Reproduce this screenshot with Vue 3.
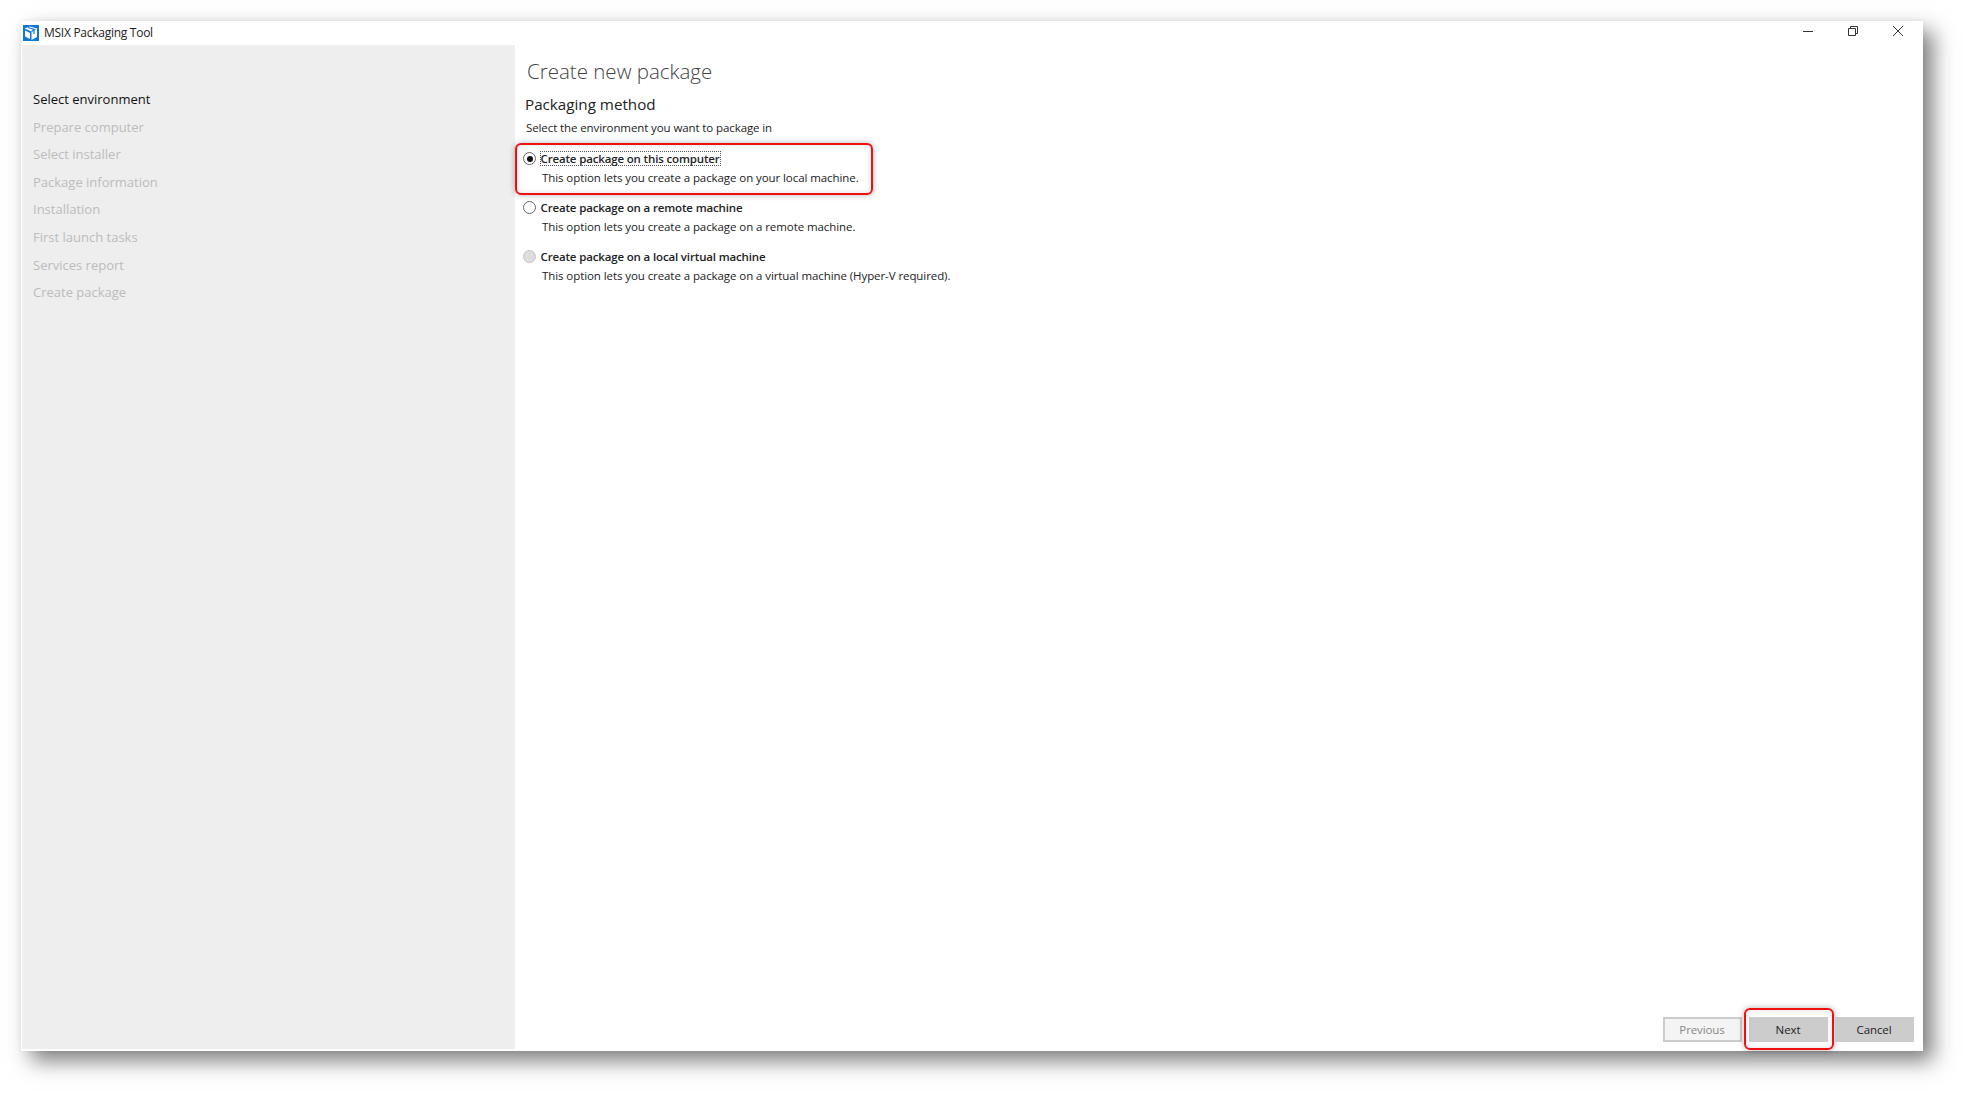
<script setup>
const steps = ['Select environment','Prepare computer','Select installer','Package information','Installation','First launch tasks','Services report','Create package']
const options = [
  { title: 'Create package on this computer', desc: 'This option lets you create a package on your local machine.', state: 'checked' },
  { title: 'Create package on a remote machine', desc: 'This option lets you create a package on a remote machine.', state: '' },
  { title: 'Create package on a local virtual machine', desc: 'This option lets you create a package on a virtual machine (Hyper-V required).', state: 'disabled' },
]
</script>

<template>
  <div class="page">
    <div class="window">
      <header class="titlebar">
        <svg class="logo" width="16" height="16" viewBox="0 0 16 16">
          <rect width="16" height="16" fill="#0f78d4"/>
          <path d="M1.500 3.500 7 1.500 14 3.500 14 12 8.500 15 8.500 6.500Z" fill="#fff"/>
          <path d="M2 5.500 7 8 7 14 2 11.500Z" fill="#fff"/>
          <path d="M5 2.500 11.500 4.500 8.500 6.500M11 4.500V9" fill="none" stroke="#0f78d4" stroke-width="1.200"/>
        </svg>
        <span class="apptitle">MSIX Packaging Tool</span>
        <div class="controls">
          <svg width="12" height="12" viewBox="0 0 12 12"><path d="M1 6.500H11" stroke="#333" fill="none"/></svg>
          <svg width="12" height="12" viewBox="0 0 12 12"><path d="M1.500 3.500H8.500V10.500H1.500ZM3.500 3.500V1.500H10.500V8.500H8.500" stroke="#333" fill="none"/></svg>
          <svg width="12" height="12" viewBox="0 0 12 12"><path d="M1 1 11 11M11 1 1 11" stroke="#333" fill="none"/></svg>
        </div>
      </header>
      <div class="body">
        <nav class="sidebar">
          <div v-for="(s, i) in steps" :key="s" class="step" :class="{ active: i === 0 }">{{ s }}</div>
        </nav>
        <main class="content">
          <h1>Create new package</h1>
          <h2>Packaging method</h2>
          <p class="intro">Select the environment you want to package in</p>
          <div class="options">
            <div v-for="o in options" :key="o.title" class="option">
              <div class="optrow">
                <span class="radio" :class="o.state"></span>
                <span class="opttitle" :class="{ focus: o.state === 'checked' }">{{ o.title }}</span>
              </div>
              <div class="optdesc">{{ o.desc }}</div>
            </div>
            <div class="mark markopt"></div>
          </div>
          <footer class="actions">
            <button class="btn prev">Previous</button>
            <button class="btn next">Next<span class="mark marknext"></span></button>
            <button class="btn">Cancel</button>
          </footer>
        </main>
      </div>
    </div>
  </div>
</template>

<style>
html, body { margin: 0; background: #fff; }
</style>

<style scoped>
.page {
  width: 1965px; height: 1093px; box-sizing: border-box;
  padding: 21px 42px 42px 21px; background: #fff; overflow: hidden;
  font-family: "Open Sans", "Noto Sans", sans-serif; color: #1a1a1a;
}
.window {
  height: 100%; display: flex; flex-direction: column; background: #fff;
  box-shadow: 10px 10px 20px rgba(0,0,0,.5), 0 0 6px rgba(0,0,0,.05);
}
.titlebar { height: 24px; flex: none; display: flex; align-items: center; padding-left: 2px; }
.logo { flex: none; margin-top: -1px; }
.apptitle { margin-left: 5px; font-size: 12px; letter-spacing: -.27px; color: #222; margin-top: -1px; }
.controls { margin-left: auto; display: flex; gap: 33px; padding-right: 19px; margin-top: -4px; }
.body { flex: 1; display: flex; min-height: 0; padding: 0 1px 2px; }
.sidebar { width: 493px; flex: none; background: #eee; padding-top: 41px; box-sizing: border-box; }
.step { height: 27.6px; line-height: 27px; padding-left: 11px; font-size: 13px; letter-spacing: 0; color: #bcbcbc; }
.step.active { color: #111; }
.content { flex: 1; display: flex; flex-direction: column; padding-left: 11px; position: relative; }
h1 { margin: 11px 0 0 1px; font-size: 20.5px; line-height: 30px; font-weight: 300; letter-spacing: 0; color: #444; }
h2 { margin: 6px 0 0 -1px; font-size: 15.200px; line-height: 24px; font-weight: 400; letter-spacing: 0; color: #222; }
.intro { margin: 3px 0 0 0; font-size: 11.500px; line-height: 18px; letter-spacing: -.1px; color: #222; }
.options { position: relative; margin-top: 12px; flex: 1; }
.option { height: 49px; }
.optrow { display: flex; align-items: center; height: 19px; }
.radio { width: 11px; height: 11px; border: 1px solid #666; border-radius: 50%; margin-left: -3px; box-sizing: content-box; background: #fff; flex: none; position: relative; }
.radio.checked::after { content: ""; position: absolute; inset: 2.500px; background: #111; border-radius: 50%; }
.radio.disabled { background: #ddd; border-color: #c4c4c4; }
.opttitle { margin-left: 3.500px; font-size: 11.500px; line-height: 15px; font-weight: 600; letter-spacing: -.15px; color: #222; padding: 0 1px; }
.opttitle.focus { outline: 1px dotted #555; outline-offset: -1px; }
.optdesc { margin-left: 16px; margin-top: 1px; font-size: 11.500px; line-height: 18px; letter-spacing: -.08px; color: #222; }
.mark { position: absolute; border: 2px solid #f01010; border-radius: 6px; box-shadow: 0 0 6px rgba(0,0,0,.3), inset 0 0 6px rgba(0,0,0,.12); pointer-events: none; box-sizing: border-box; }
.markopt { left: -11px; top: -6px; width: 358px; height: 52px; }
.actions { display: flex; justify-content: flex-end; gap: 7px; padding: 0 8px 7px 0; }
.btn { width: 79px; height: 25px; border: 2px solid #ccc; background: #ccc; padding: 0 1px 0 0; font: inherit; font-size: 11.500px; letter-spacing: -.1px; color: #222; position: relative; box-sizing: border-box; }
.btn.prev { background: #f4f4f4; color: #888; }
.marknext { left: -7px; top: -11px; width: 90px; height: 42px; }
</style>
